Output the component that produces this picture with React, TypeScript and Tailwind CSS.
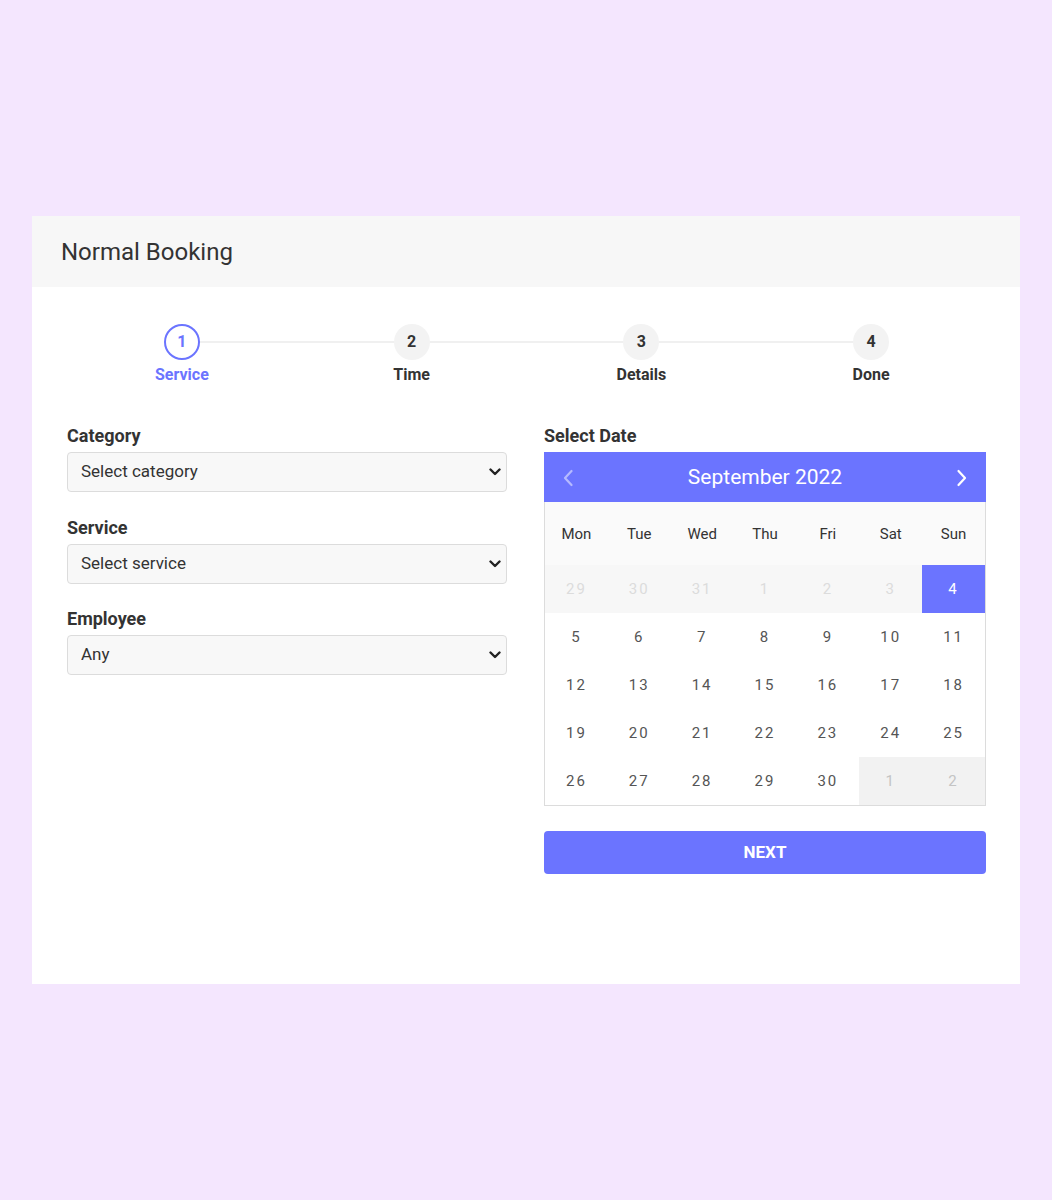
import React from 'react';

const steps = [
  { n: 1, label: 'Service' },
  { n: 2, label: 'Time' },
  { n: 3, label: 'Details' },
  { n: 4, label: 'Done' },
];

const weekdays = ['Mon', 'Tue', 'Wed', 'Thu', 'Fri', 'Sat', 'Sun'];

type Day = { d: number; kind: 'past' | 'current' | 'selected' | 'next' };

const weeks: Day[][] = [
  [
    { d: 29, kind: 'past' },
    { d: 30, kind: 'past' },
    { d: 31, kind: 'past' },
    { d: 1, kind: 'past' },
    { d: 2, kind: 'past' },
    { d: 3, kind: 'past' },
    { d: 4, kind: 'selected' },
  ],
  [5, 6, 7, 8, 9, 10, 11].map((d) => ({ d, kind: 'current' as const })),
  [12, 13, 14, 15, 16, 17, 18].map((d) => ({ d, kind: 'current' as const })),
  [19, 20, 21, 22, 23, 24, 25].map((d) => ({ d, kind: 'current' as const })),
  [
    ...[26, 27, 28, 29, 30].map((d) => ({ d, kind: 'current' as const })),
    { d: 1, kind: 'next' },
    { d: 2, kind: 'next' },
  ],
];

const dayClass: Record<Day['kind'], string> = {
  past: 'bg-[#f7f7f7] text-[#dcdcdc]',
  current: 'bg-white text-[#555]',
  selected: 'bg-[#6b74ff] text-white',
  next: 'bg-[#f2f2f2] text-[#c4c4c4]',
};

function SelectField({ label, value }: { label: string; value: string }) {
  return (
    <div>
      <div className="mb-1 text-[18px] font-bold leading-6 text-[#333]">{label}</div>
      <div className="relative">
        <select
          defaultValue={value}
          className="h-10 w-full appearance-none rounded-sm border border-[#dcdcdc] bg-[#f8f8f8] pl-[13px] text-[17px] text-[#333] outline-none"
        >
          <option>{value}</option>
        </select>
        <svg
          viewBox="0 0 12 8"
          className="pointer-events-none absolute right-[6px] top-[16px] h-[8px] w-[12px]"
          fill="none"
          stroke="#222"
          strokeWidth="2.4"
          strokeLinecap="round"
          strokeLinejoin="round"
        >
          <path d="M1.5 1.5 6 6l4.5-4.5" />
        </svg>
      </div>
    </div>
  );
}

export default function App() {
  return (
    <div className="min-h-[1200px] bg-[#f4e6fe] px-8 pt-[216px] font-['Roboto','Liberation_Sans',sans-serif]">
      <div className="h-[768px] bg-white">
        <div className="flex h-[71px] items-center bg-[#f7f7f7] px-[29px] text-[24px] text-[#333]">
          Normal Booking
        </div>

        <div className="pl-[35px] pr-[34px] pt-[37px]">
          {/* stepper */}
          <div className="relative grid grid-cols-4">
            <div className="absolute left-[12.5%] right-[12.5%] top-[17px] h-[2px] bg-[#f0f0f0]" />
            {steps.map((s) => {
              const active = s.n === 1;
              return (
                <div key={s.n} className="relative flex flex-col items-center">
                  <div
                    className={
                      active
                        ? 'flex h-9 w-9 items-center justify-center rounded-full border-2 border-[#6b74ff] bg-white text-[16px] font-bold text-[#6b74ff]'
                        : 'flex h-9 w-9 items-center justify-center rounded-full bg-[#f3f3f3] text-[16px] font-bold text-[#333]'
                    }
                  >
                    {s.n}
                  </div>
                  <div
                    className={
                      active
                        ? 'mt-[5px] text-[16px] font-bold leading-5 text-[#6b74ff]'
                        : 'mt-[5px] text-[16px] font-bold leading-5 text-[#333]'
                    }
                  >
                    {s.label}
                  </div>
                </div>
              );
            })}
          </div>

          <div className="mt-[39px] grid grid-cols-[440px_442px] justify-between">
            <div className="flex flex-col gap-[23.5px]">
              <SelectField label="Category" value="Select category" />
              <SelectField label="Service" value="Select service" />
              <SelectField label="Employee" value="Any" />
            </div>

            <div>
              <div className="mb-1 text-[18px] font-bold leading-6 text-[#333]">Select Date</div>
              <div className="flex h-[50px] items-center justify-between bg-[#6b74ff] px-[18px] pt-[1px] text-white">
                <svg viewBox="0 0 12 18" className="h-[18px] w-[12px] opacity-50" fill="none" stroke="white" strokeWidth="2.2" strokeLinecap="round" strokeLinejoin="round">
                  <path d="M9.5 2 3 9l6.5 7" />
                </svg>
                <span className="text-[21px]">September 2022</span>
                <svg viewBox="0 0 12 18" className="h-[18px] w-[12px]" fill="none" stroke="white" strokeWidth="2.2" strokeLinecap="round" strokeLinejoin="round">
                  <path d="M2.5 2 9 9l-6.5 7" />
                </svg>
              </div>
              <div className="border border-t-0 border-[#dcdcdc]">
                <div className="grid h-[63px] grid-cols-7 items-center bg-[#fafafa] pt-[1px] text-center text-[15px] text-[#333]">
                  {weekdays.map((w) => (
                    <div key={w}>{w}</div>
                  ))}
                </div>
                {weeks.map((week, i) => (
                  <div key={i} className="grid h-[48px] grid-cols-7">
                    {week.map((day, j) => (
                      <div
                        key={j}
                        className={`flex items-center justify-center text-[15px] tracking-[2px] ${dayClass[day.kind]}`}
                      >
                        {day.d}
                      </div>
                    ))}
                  </div>
                ))}
              </div>
              <button className="mt-[25px] h-[43px] w-full rounded-sm bg-[#6b74ff] text-[17px] font-bold text-white">
                NEXT
              </button>
            </div>
          </div>
        </div>
      </div>
    </div>
  );
}
